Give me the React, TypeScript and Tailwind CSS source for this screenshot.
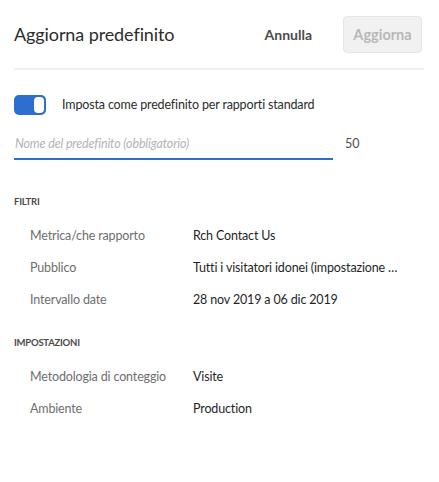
import React from 'react';

const filtri = [
  { label: 'Metrica/che rapporto', value: 'Rch Contact Us' },
  { label: 'Pubblico', value: 'Tutti i visitatori idonei (impostazione …' },
  { label: 'Intervallo date', value: '28 nov 2019 a 06 dic 2019' },
];

const impostazioni = [
  { label: 'Metodologia di conteggio', value: 'Visite' },
  { label: 'Ambiente', value: 'Production' },
];

function Section({ title, rows }: { title: string; rows: { label: string; value: string }[] }) {
  return (
    <div>
      <div className="text-[9.5px] font-bold text-[#4b4b4b] tracking-tight h-[14px] leading-[14px]">{title}</div>
      <div className="mt-[11px] flex flex-col">
        {rows.map((r) => (
          <div key={r.label} className="flex h-[32px] items-center text-[12.5px] tracking-[-0.15px]">
            <div className="w-[179px] shrink-0 pl-[16px] text-[#6e6e6e] whitespace-nowrap">{r.label}</div>
            <div className="text-[#1f1f1f] whitespace-nowrap">{r.value}</div>
          </div>
        ))}
      </div>
    </div>
  );
}

export default function App() {
  return (
    <div className="w-[439px] h-[482px] bg-white px-[14px] pt-[16px]" style={{ fontFamily: 'Lato, "Open Sans", sans-serif' }}>
      <div className="flex items-center h-[37px] mr-[3px]">
        <h1 className="text-[18px] tracking-[-0.1px] text-[#2c2c2c] flex-1">Aggiorna predefinito</h1>
        <button className="text-[14px] font-bold text-[#4b4b4b] mr-[31px]">Annulla</button>
        <button className="h-[37px] w-[79px] rounded-[4px] border border-[#e6e6e6] bg-[#f1f1f1] text-[14.5px] font-bold text-[#b8b8b8]">
          Aggiorna
        </button>
      </div>
      <div className="mt-[15px] h-[2px] bg-[#efefef] mr-[1px]" />

      <div className="mt-[25px] flex items-center h-[20px]">
        <div className="relative w-[32px] h-[20px] rounded-[5px] bg-[#2d6fd0]">
          <div className="absolute right-[2px] top-[2px] w-[10px] h-[16px] rounded-[4px] bg-white" />
        </div>
        <span className="ml-[16px] text-[12.5px] tracking-[-0.15px] text-[#2c2c2c]">
          Imposta come predefinito per rapporti standard
        </span>
      </div>

      <div className="mt-[18px] flex items-end">
        <div className="w-[319px] border-b-2 border-[#2d6fd0] h-[27px] flex items-start pt-[2px]">
          <span className="pl-[1px] text-[12.5px] tracking-[-0.15px] italic text-[#b3b3b3]">
            Nome del predefinito (obbligatorio)
          </span>
        </div>
        <span className="ml-[12px] mb-[6px] text-[12.5px] text-[#4b4b4b]">50</span>
      </div>

      <div className="mt-[35px]">
        <Section title="FILTRI" rows={filtri} />
      </div>
      <div className="mt-[20px]">
        <Section title="IMPOSTAZIONI" rows={impostazioni} />
      </div>
    </div>
  );
}
